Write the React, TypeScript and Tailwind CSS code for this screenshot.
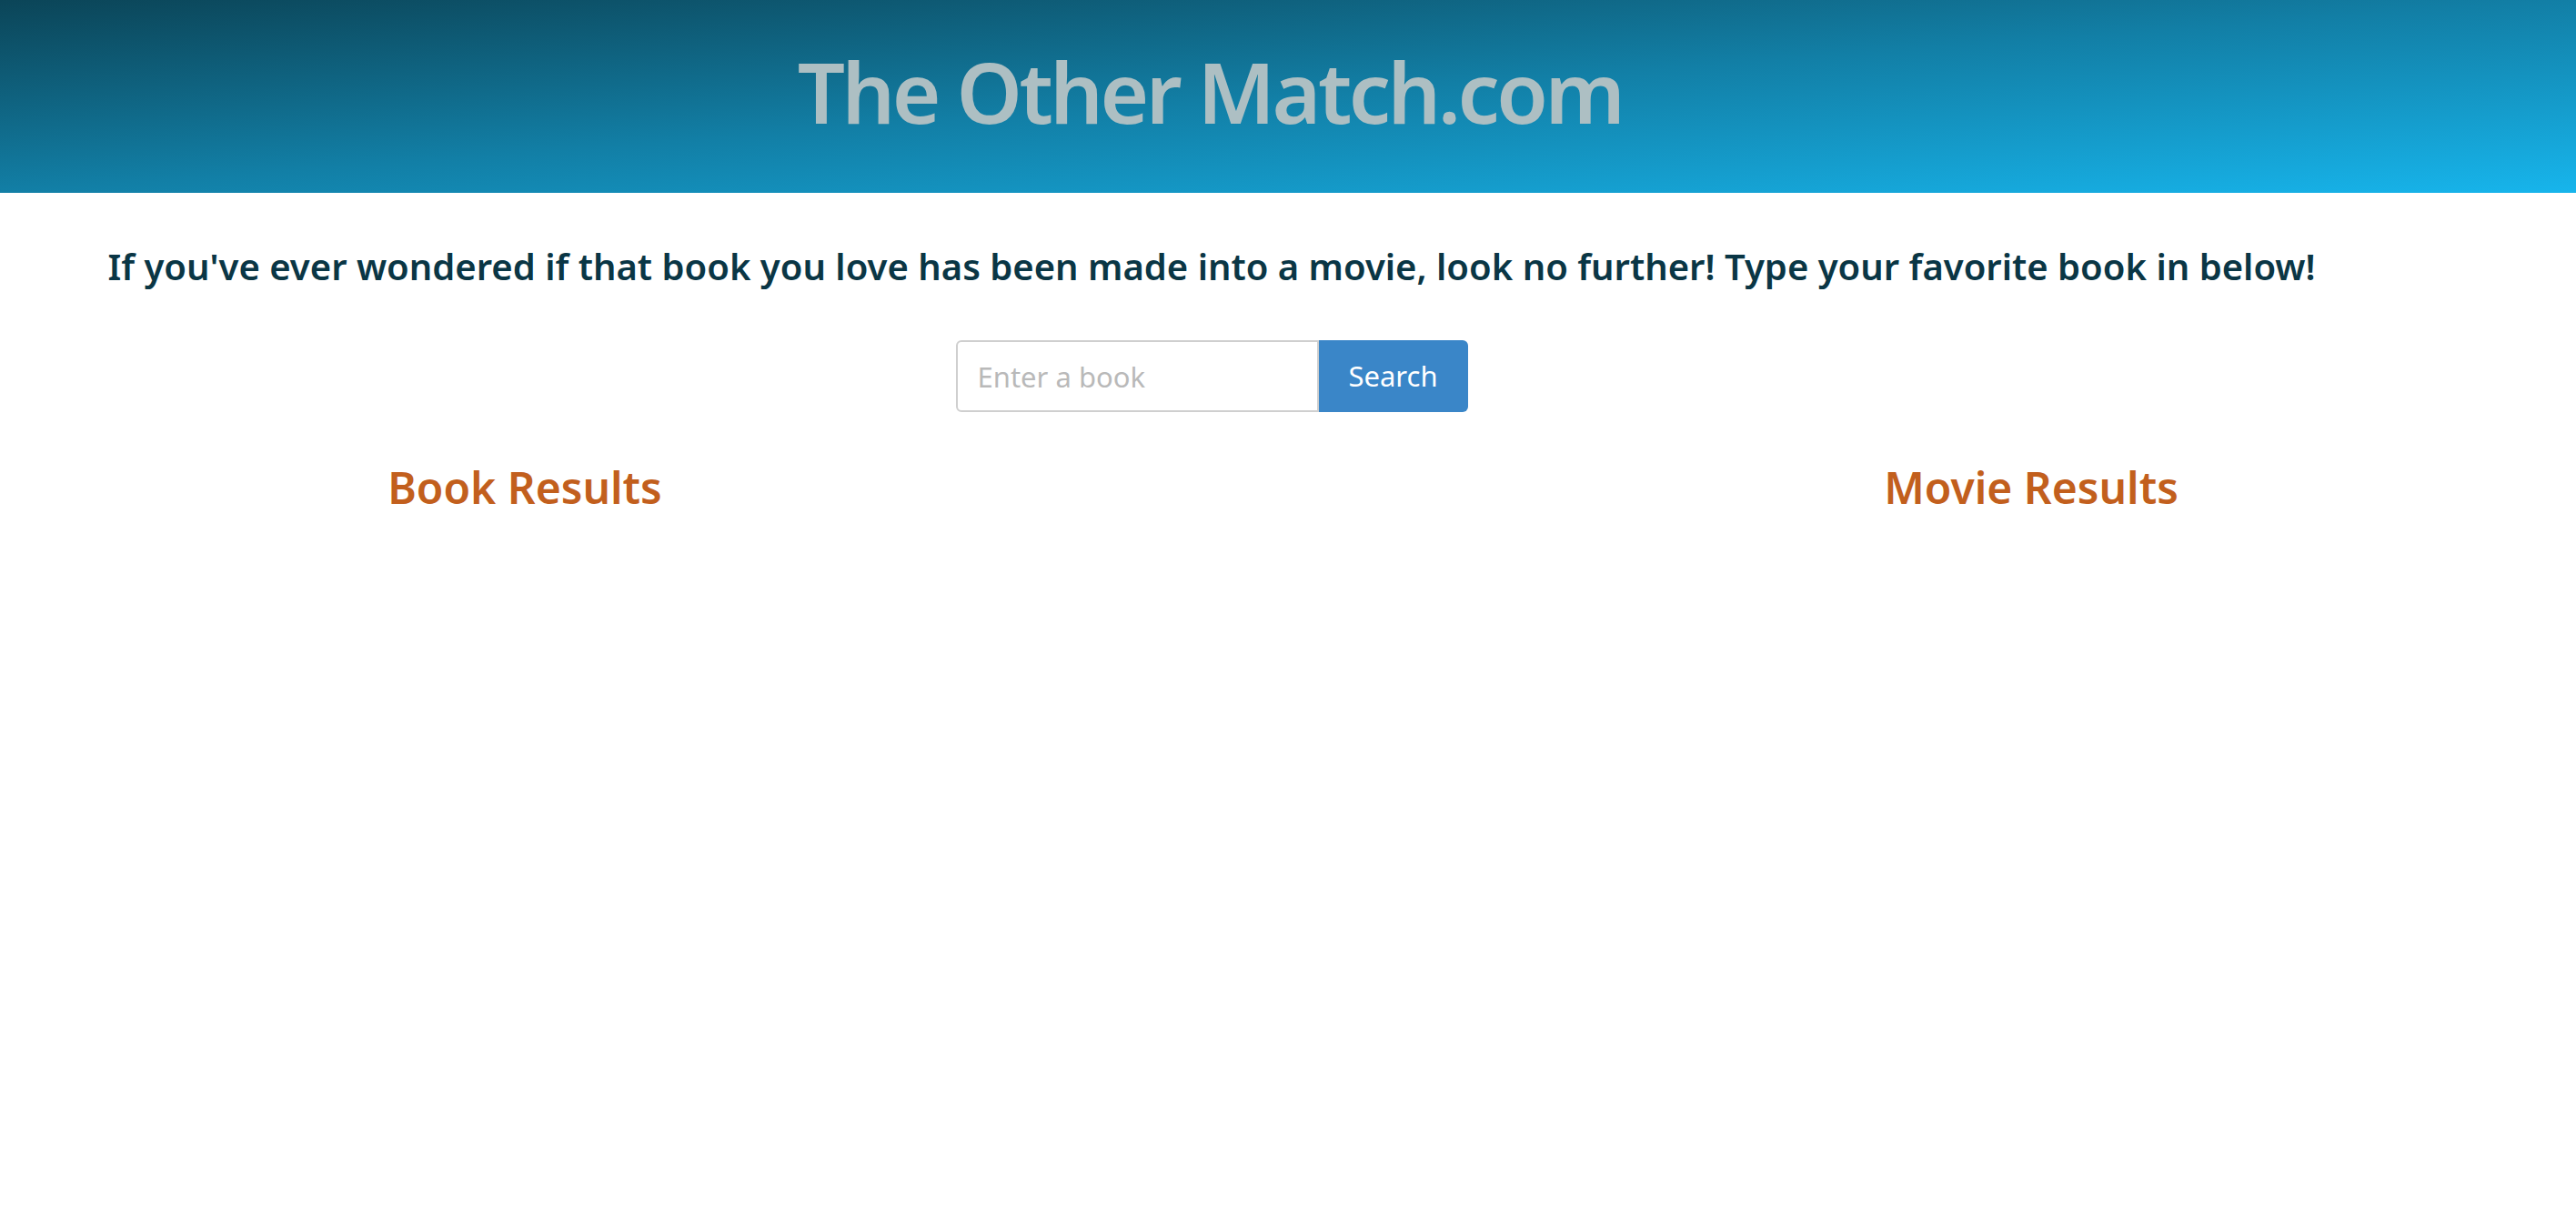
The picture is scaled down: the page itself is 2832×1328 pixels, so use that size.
import { useState } from 'react';

// 책 → 영화 검색 랜딩 화면
function App() {
  const [query, setQuery] = useState('');

  return (
    <div className="min-h-screen bg-white font-['Noto_Sans',sans-serif]">
      {/* 상단 헤더 (그라디언트) */}
      <header className="h-[212px] bg-gradient-to-br from-[#0b4558] via-[#127fa6] to-[#17b5ec] pr-[172px]">
        <h1 className="pt-[46px] text-center text-[92px] font-semibold leading-[110px] tracking-[-3.5px] text-[#adbfc3]">
          The Other Match.com
        </h1>
      </header>

      <main className="pr-[168px]">
        <p className="mt-[55px] text-center text-[40px] font-semibold leading-[52px] text-[#0a3645]">
          If you've ever wondered if that book you love has been made into a
          movie, look no further! Type your favorite book in below!
        </p>

        {/* 검색 폼 */}
        <form
          className="mt-[55px] flex justify-center"
          onSubmit={(e) => e.preventDefault()}
        >
          <input
            type="text"
            value={query}
            onChange={(e) => setQuery(e.target.value)}
            placeholder="Enter a book"
            className="h-[79px] w-[399px] rounded-l-[6px] border-2 border-[#cfcfcf] px-[22px] text-[31px] text-[#555] outline-none placeholder:text-[#b9b9b9]"
          />
          <button
            type="submit"
            className="h-[79px] w-[164px] rounded-r-[6px] bg-[#3a86c8] text-[31px] text-white"
          >
            Search
          </button>
        </form>
      </main>

      {/* 결과 영역 */}
      <section className="mt-[53px] flex">
        <div className="w-[1154px] text-center">
          <h2 className="text-[48px] font-semibold leading-[60px] text-[#c25f1d]">
            Book Results
          </h2>
        </div>
        <div className="ml-[502px] w-[1154px] text-center">
          <h2 className="text-[48px] font-semibold leading-[60px] text-[#c25f1d]">
            Movie Results
          </h2>
        </div>
      </section>
    </div>
  );
}

export default App;
